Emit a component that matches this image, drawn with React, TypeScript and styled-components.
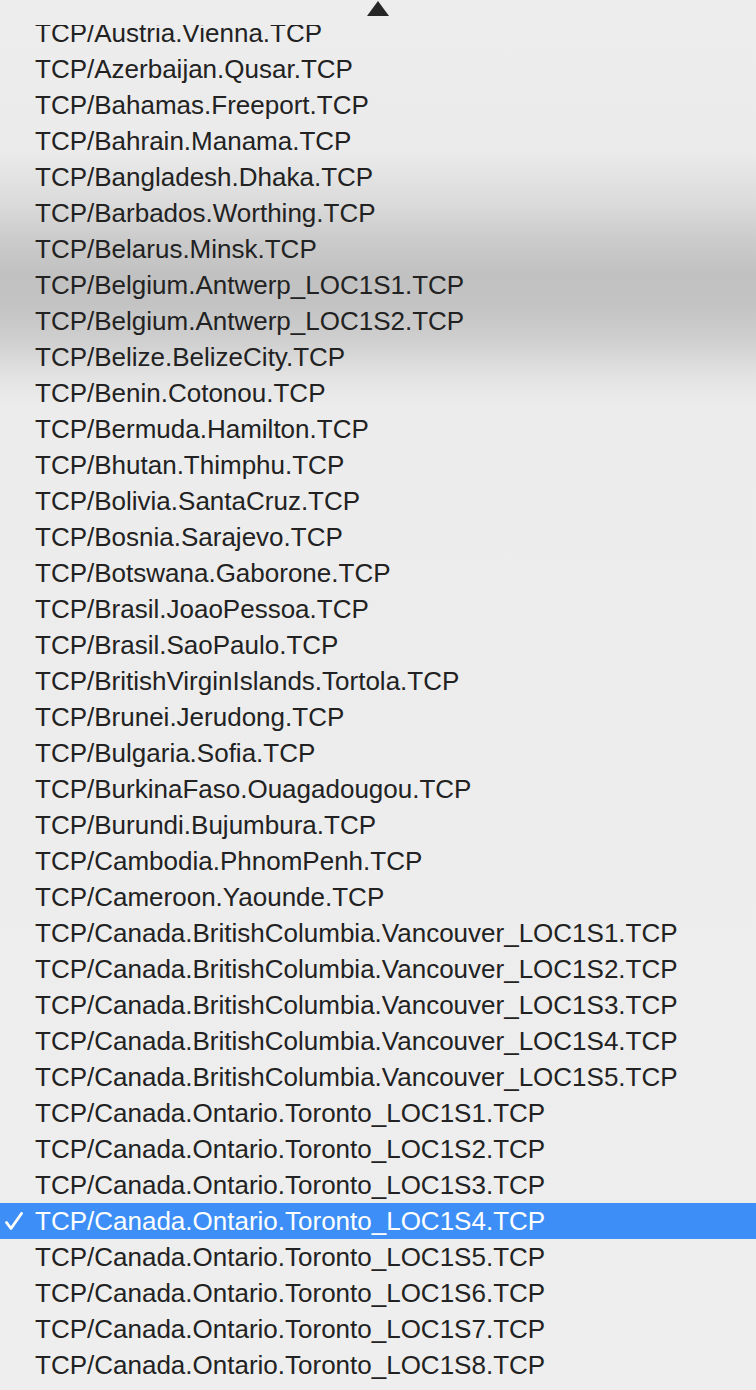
import React from 'react';
import styled, { createGlobalStyle } from 'styled-components';

const GlobalStyle = createGlobalStyle`
  html, body {
    margin: 0;
    padding: 0;
    background: #eeeeee;
  }
  * {
    box-sizing: border-box;
  }
`;

const items = [
  'TCP/Austria.Vienna.TCP',
  'TCP/Azerbaijan.Qusar.TCP',
  'TCP/Bahamas.Freeport.TCP',
  'TCP/Bahrain.Manama.TCP',
  'TCP/Bangladesh.Dhaka.TCP',
  'TCP/Barbados.Worthing.TCP',
  'TCP/Belarus.Minsk.TCP',
  'TCP/Belgium.Antwerp_LOC1S1.TCP',
  'TCP/Belgium.Antwerp_LOC1S2.TCP',
  'TCP/Belize.BelizeCity.TCP',
  'TCP/Benin.Cotonou.TCP',
  'TCP/Bermuda.Hamilton.TCP',
  'TCP/Bhutan.Thimphu.TCP',
  'TCP/Bolivia.SantaCruz.TCP',
  'TCP/Bosnia.Sarajevo.TCP',
  'TCP/Botswana.Gaborone.TCP',
  'TCP/Brasil.JoaoPessoa.TCP',
  'TCP/Brasil.SaoPaulo.TCP',
  'TCP/BritishVirginIslands.Tortola.TCP',
  'TCP/Brunei.Jerudong.TCP',
  'TCP/Bulgaria.Sofia.TCP',
  'TCP/BurkinaFaso.Ouagadougou.TCP',
  'TCP/Burundi.Bujumbura.TCP',
  'TCP/Cambodia.PhnomPenh.TCP',
  'TCP/Cameroon.Yaounde.TCP',
  'TCP/Canada.BritishColumbia.Vancouver_LOC1S1.TCP',
  'TCP/Canada.BritishColumbia.Vancouver_LOC1S2.TCP',
  'TCP/Canada.BritishColumbia.Vancouver_LOC1S3.TCP',
  'TCP/Canada.BritishColumbia.Vancouver_LOC1S4.TCP',
  'TCP/Canada.BritishColumbia.Vancouver_LOC1S5.TCP',
  'TCP/Canada.Ontario.Toronto_LOC1S1.TCP',
  'TCP/Canada.Ontario.Toronto_LOC1S2.TCP',
  'TCP/Canada.Ontario.Toronto_LOC1S3.TCP',
  'TCP/Canada.Ontario.Toronto_LOC1S4.TCP',
  'TCP/Canada.Ontario.Toronto_LOC1S5.TCP',
  'TCP/Canada.Ontario.Toronto_LOC1S6.TCP',
  'TCP/Canada.Ontario.Toronto_LOC1S7.TCP',
  'TCP/Canada.Ontario.Toronto_LOC1S8.TCP',
];

const SELECTED = 'TCP/Canada.Ontario.Toronto_LOC1S4.TCP';

const MenuBlock = styled.div`
  position: relative;
  width: 756px;
  height: 1390px;
  overflow: hidden;
  background: linear-gradient(
    to bottom,
    #ededed 0px,
    #ebebeb 150px,
    #dcdcdc 200px,
    #cbcbcb 240px,
    #c1c1c1 275px,
    #c3c3c3 305px,
    #cfcfcf 340px,
    #e2e2e2 375px,
    #ececec 405px,
    #eeeeee 1390px
  );
  font-family: 'Liberation Sans', Arial, sans-serif;
`;

const ScrollArrow = styled.div`
  position: absolute;
  top: 0;
  left: 0;
  right: 0;
  height: 25px;
  z-index: 2;
  display: flex;
  justify-content: center;
  align-items: flex-start;
  padding-top: 1px;
  background: #ededed;
  svg {
    display: block;
  }
`;

const MenuList = styled.ul`
  list-style: none;
  margin: 0;
  padding: 15px 0 0 0;
`;

const MenuItem = styled.li<{ selected: boolean }>`
  position: relative;
  display: flex;
  align-items: center;
  height: 36px;
  padding-left: 35px;
  font-size: 26px;
  line-height: 36px;
  white-space: nowrap;
  color: ${props => (props.selected ? '#ffffff' : '#222222')};
  background: ${props => (props.selected ? '#3d8ff7' : 'transparent')};
  .check {
    position: absolute;
    left: 4px;
    top: 9px;
  }
`;

const CheckMark = () => (
  <svg className="check" width="20" height="19" viewBox="0 0 20 19">
    <path
      d="M2.5 10.5 L7 16.5 L17.5 1.5"
      fill="none"
      stroke="#ffffff"
      strokeWidth="2.8"
      strokeLinecap="round"
      strokeLinejoin="round"
    />
  </svg>
);

const App: React.FC = () => {
  return (
    <>
      <GlobalStyle />
      <MenuBlock>
        <ScrollArrow>
          <svg width="24" height="16" viewBox="0 0 24 16">
            <polygon points="12,0 23,15 1,15" fill="#262626" />
          </svg>
        </ScrollArrow>
        <MenuList>
          {items.map(item => (
            <MenuItem key={item} selected={item === SELECTED}>
              {item === SELECTED && <CheckMark />}
              {item}
            </MenuItem>
          ))}
        </MenuList>
      </MenuBlock>
    </>
  );
};

export default App;
